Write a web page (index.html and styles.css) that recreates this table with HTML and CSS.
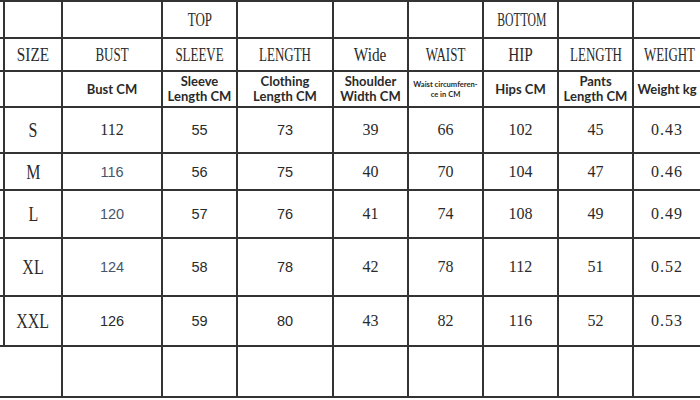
FILE: index.html
```html
<!DOCTYPE html>
<html lang="en">
<head>
<meta charset="utf-8">
<title>Size chart</title>
<link rel="stylesheet" href="styles.css">
</head>
<body>
<table class="chart">
  <colgroup>
    <col class="c-pre">
    <col class="c-size">
    <col class="c-bust">
    <col class="c-75">
    <col class="c-len">
    <col class="c-75">
    <col class="c-75">
    <col class="c-75">
    <col class="c-75">
    <col class="c-last">
  </colgroup>
  <tr class="r-group">
    <td class="pre"></td>
    <td></td>
    <td></td>
    <td class="hd"><span class="sx">TOP</span></td>
    <td></td>
    <td></td>
    <td></td>
    <td class="hd"><span class="sx sx-tight">BOTTOM</span></td>
    <td></td>
    <td class="last"></td>
  </tr>
  <tr class="r-name">
    <td class="pre"></td>
    <td class="hd"><span class="sx sx-wide">SIZE</span></td>
    <td class="hd"><span class="sx">BUST</span></td>
    <td class="hd"><span class="sx">SLEEVE</span></td>
    <td class="hd"><span class="sx">LENGTH</span></td>
    <td class="hd"><span class="sx sx-wide">Wide</span></td>
    <td class="hd"><span class="sx">WAIST</span></td>
    <td class="hd"><span class="sx sx-wide">HIP</span></td>
    <td class="hd"><span class="sx">LENGTH</span></td>
    <td class="hd last"><span class="sx">WEIGHT</span></td>
  </tr>
  <tr class="r-desc">
    <td class="pre"></td>
    <td></td>
    <td class="desc">Bust CM</td>
    <td class="desc">Sleeve<br>Length CM</td>
    <td class="desc">Clothing<br>Length CM</td>
    <td class="desc">Shoulder<br>Width CM</td>
    <td class="desc desc-small">Waist circumferen-<br>ce in CM</td>
    <td class="desc">Hips CM</td>
    <td class="desc">Pants<br>Length CM</td>
    <td class="desc last">Weight kg</td>
  </tr>
  <tr class="r-s">
    <td class="pre"></td>
    <td class="sz"><span class="sx">S</span></td>
    <td class="num-serif">112</td>
    <td class="num-sans">55</td>
    <td class="num-sans">73</td>
    <td class="num-serif">39</td>
    <td class="num-serif">66</td>
    <td class="num-serif">102</td>
    <td class="num-serif">45</td>
    <td class="num-serif wt last">0.43</td>
  </tr>
  <tr class="r-m">
    <td class="pre"></td>
    <td class="sz"><span class="sx">M</span></td>
    <td class="num-sans blue">116</td>
    <td class="num-sans">56</td>
    <td class="num-sans">75</td>
    <td class="num-serif">40</td>
    <td class="num-serif">70</td>
    <td class="num-serif">104</td>
    <td class="num-serif">47</td>
    <td class="num-serif wt last">0.46</td>
  </tr>
  <tr class="r-l">
    <td class="pre"></td>
    <td class="sz"><span class="sx">L</span></td>
    <td class="num-sans blue">120</td>
    <td class="num-sans">57</td>
    <td class="num-sans">76</td>
    <td class="num-serif">41</td>
    <td class="num-serif">74</td>
    <td class="num-serif">108</td>
    <td class="num-serif">49</td>
    <td class="num-serif wt last">0.49</td>
  </tr>
  <tr class="r-xl">
    <td class="pre"></td>
    <td class="sz"><span class="sx">XL</span></td>
    <td class="num-sans blue">124</td>
    <td class="num-sans">58</td>
    <td class="num-sans">78</td>
    <td class="num-serif">42</td>
    <td class="num-serif">78</td>
    <td class="num-serif">112</td>
    <td class="num-serif">51</td>
    <td class="num-serif wt last">0.52</td>
  </tr>
  <tr class="r-xxl">
    <td class="pre"></td>
    <td class="sz"><span class="sx">XXL</span></td>
    <td class="num-sans">126</td>
    <td class="num-sans">59</td>
    <td class="num-sans">80</td>
    <td class="num-serif">43</td>
    <td class="num-serif">82</td>
    <td class="num-serif">116</td>
    <td class="num-serif">52</td>
    <td class="num-serif wt last">0.53</td>
  </tr>
  <tr class="r-empty">
    <td class="pre pre-open"></td>
    <td class="open-left"></td>
    <td></td>
    <td></td>
    <td></td>
    <td></td>
    <td></td>
    <td></td>
    <td></td>
    <td class="last"></td>
  </tr>
</table>
</body>
</html>
```
FILE: styles.css
```css
html, body {
  margin: 0;
  padding: 0;
  background: #ffffff;
  overflow: hidden;
}

.chart {
  border-collapse: collapse;
  table-layout: fixed;
  width: 700px;
  margin-top: 0;
}

.c-pre { width: 4px; }
.c-size { width: 58px; }
.c-bust { width: 100px; }
.c-75 { width: 75px; }
.c-len { width: 96px; }
.c-last { width: 67px; }

.chart td {
  box-sizing: border-box;
  border: 2px solid #333333;
  padding: 0;
  text-align: center;
  vertical-align: middle;
  color: #2a2a2a;
  overflow: visible;
  white-space: nowrap;
}

.chart td.pre {
  border-left: none;
}

.chart td.last {
  border-right: none;
}

.chart td.pre-open {
  border-right: none;
}

.chart td.open-left {
  border-left: none;
}

.r-group td { height: 37px; }
.r-name td { height: 33px; }
.r-desc td { height: 36px; }
.r-s td { height: 46px; }
.r-m td { height: 37px; }
.r-l td { height: 48px; }
.r-xl td { height: 58px; }
.r-xxl td { height: 50px; }
.r-empty td { height: 51px; }

/* condensed serif heading words */
.hd {
  font-family: "Liberation Serif", "Times New Roman", serif;
  font-size: 18px;
  line-height: 20px;
  padding-top: 2px;
}

.sx {
  display: inline-block;
  transform: scaleX(0.72);
  transform-origin: center;
}

.sx-wide {
  transform: scaleX(0.85);
}

.sx-tight {
  transform: scaleX(0.65);
}

.desc {
  font-family: Lato, "Liberation Sans", sans-serif;
  font-weight: 700;
  font-size: 13px;
  line-height: 15px;
  color: #2a2130;
}

.desc-small {
  font-size: 7.6px;
  line-height: 10px;
  font-weight: 700;
  color: #3a3240;
}

.sz {
  font-family: "Liberation Serif", "Times New Roman", serif;
  font-size: 21px;
  line-height: 24px;
  color: #2c2c2c;
}

.sz .sx {
  transform: scaleX(0.76);
}

.num-serif {
  font-family: "Liberation Serif", "Times New Roman", serif;
  font-size: 16px;
  line-height: 20px;
  color: #333333;
}

.num-serif.wt {
  letter-spacing: 1px;
}

.num-sans {
  font-family: "Liberation Sans", Arial, sans-serif;
  font-size: 14.5px;
  line-height: 18px;
  color: #3a3a3a;
}

.num-sans.blue {
  color: #45556b;
}
```
